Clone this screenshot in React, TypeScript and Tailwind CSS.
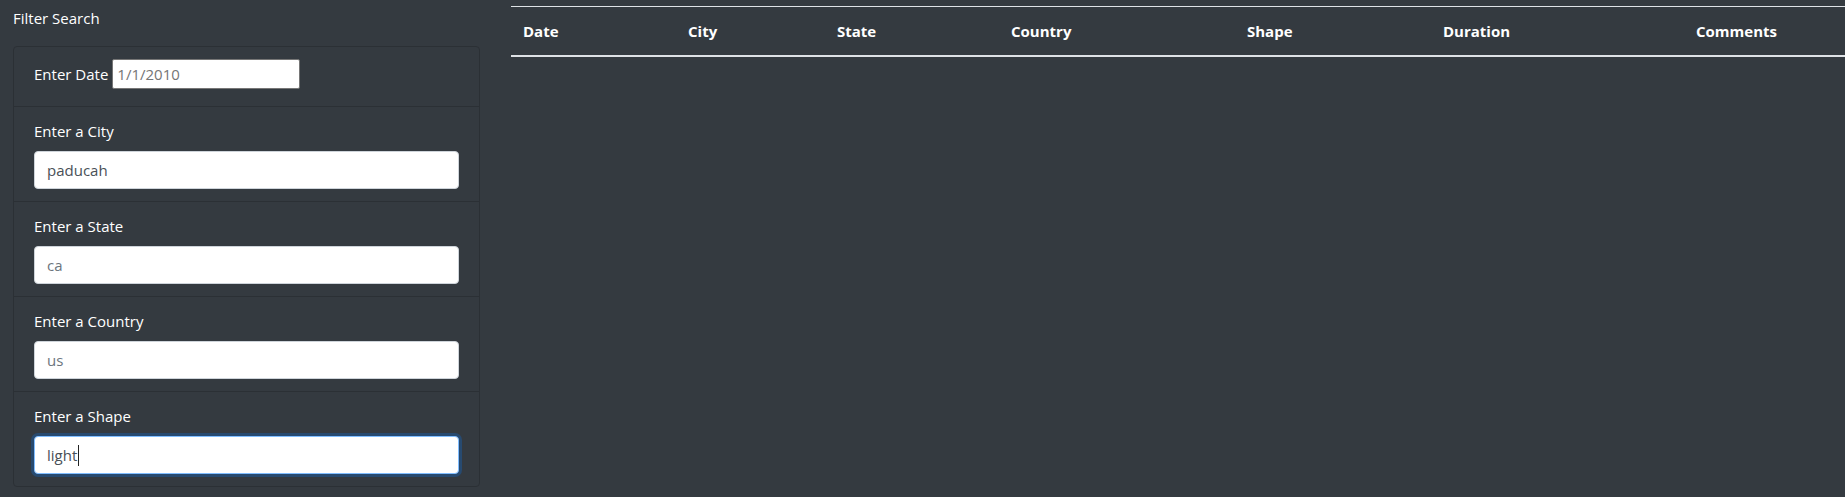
import React from 'react';

const fields = [
  { id: 'city', label: 'Enter a City', value: 'paducah' },
  { id: 'state', label: 'Enter a State', placeholder: 'ca' },
  { id: 'country', label: 'Enter a Country', placeholder: 'us' },
];

const columns = [
  { name: 'Date', width: 'w-[165px]' },
  { name: 'City', width: 'w-[149px]' },
  { name: 'State', width: 'w-[174px]' },
  { name: 'Country', width: 'w-[236px]' },
  { name: 'Shape', width: 'w-[196px]' },
  { name: 'Duration', width: 'w-[253px]' },
  { name: 'Comments', width: 'w-[161px]' },
];

const inputClass =
  'block w-full h-[38px] px-[12px] bg-white border border-[#ced4da] rounded-[4px] text-[15px] text-[#495057] placeholder:text-[#6c757d] outline-none';

const App: React.FC = () => {
  return (
    <div className="min-h-screen bg-[#343a40] text-white font-['Open_Sans',sans-serif] text-[15px] leading-[24px] flex">
      {/* Filters */}
      <aside className="w-[467px] ml-[13px] pt-[6px] shrink-0">
        <div className="mb-[16px]">Filter Search</div>
        <ul className="border border-[#2b3035] rounded-[4px]">
          <li className="px-[20px] pt-[12px] pb-[17px] flex items-center">
            <label htmlFor="date" className="mr-[4px]">Enter Date</label>
            <input
              id="date"
              type="text"
              placeholder="1/1/2010"
              className="w-[188px] h-[30px] px-[4px] bg-white border border-[#767676] rounded-[2px] text-[15px] text-black placeholder:text-[#757575] outline-none"
            />
          </li>
          {fields.map((f) => (
            <li key={f.id} className="px-[20px] py-[12px] border-t border-[#2b3035]">
              <label htmlFor={f.id} className="block mb-[8px]">{f.label}</label>
              <input
                id={f.id}
                type="text"
                defaultValue={f.value}
                placeholder={f.placeholder}
                className={inputClass}
              />
            </li>
          ))}
          <li className="px-[20px] py-[12px] border-t border-[#2b3035]">
            <label htmlFor="shape" className="block mb-[8px]">Enter a Shape</label>
            <div className="relative">
              <input
                id="shape"
                type="text"
                defaultValue="light"
                className="block w-full h-[38px] px-[12px] bg-white border border-[#80bdff] rounded-[4px] text-[15px] text-[#495057] outline-none shadow-[0_0_0_3px_rgba(0,123,255,0.25)] caret-transparent"
              />
              {/* caret */}
              <span className="absolute left-[44px] top-[9px] w-px h-[21px] bg-[#222]" />
            </div>
          </li>
        </ul>
      </aside>

      {/* Results */}
      <main className="flex-1 ml-[31px] pt-[6px]">
        <table className="w-full table-fixed border-collapse">
          <thead>
            <tr>
              {columns.map((c) => (
                <th
                  key={c.name}
                  className={`${c.width} p-[12px] text-left font-bold border-t border-b-2 border-[#dee2e6]`}
                >
                  {c.name}
                </th>
              ))}
            </tr>
          </thead>
          <tbody />
        </table>
      </main>
    </div>
  );
};

export default App;
